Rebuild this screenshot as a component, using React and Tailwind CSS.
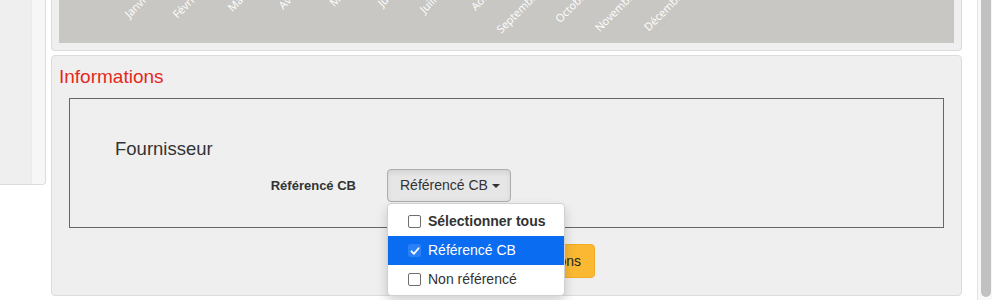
import React from "react";

const months = ["Janvier","Février","Mars","Avril","Mai","Juin","Juillet","Août","Septembre","Octobre","Novembre","Décembre"];

function Chart() {
  return (
    <div className="h-[43px] w-full bg-[#c8c7c3] overflow-hidden">
      <svg width="896" height="43" className="block">
        {months.map((m, i) => {
          const x = 95 + 48.4 * i;
          const y = -6;
          return (
            <text
              key={m}
              x={x}
              y={y}
              fill="#ffffff"
              fontSize="11"
              fontFamily="'Open Sans', 'DejaVu Sans', sans-serif"
              textAnchor="end"
              transform={`rotate(-45 ${x} ${y})`}
            >
              {m}
            </text>
          );
        })}
      </svg>
    </div>
  );
}

function Check({ checked }) {
  if (checked) {
    return (
      <span className="flex h-[13px] w-[13px] items-center justify-center rounded-[2px] bg-[#2a80f4]">
        <svg width="10" height="10" viewBox="0 0 10 10">
          <path d="M1.5 5.3 L4 7.8 L8.6 2.2" stroke="#fff" strokeWidth="1.8" fill="none" strokeLinecap="round" strokeLinejoin="round" />
        </svg>
      </span>
    );
  }
  return <span className="block h-[13px] w-[13px] rounded-[2px] border border-[#6e6e6e] bg-white" />;
}

export default function App() {
  return (
    <div
      className="flex h-[300px] w-[992px] overflow-hidden bg-white text-[#333]"
      style={{ fontFamily: "'Liberation Sans', Arial, sans-serif" }}
    >
      {/* sidebar */}
      <div className="flex h-[185px] w-[46px] shrink-0 overflow-hidden rounded-br-[4px] border-b border-r border-[#dcdcdc] bg-[#efefef]">
        <div className="flex-1" />
        <div className="w-[14px] border-l border-[#ececec] bg-[#f7f7f7]" />
      </div>

      {/* main */}
      <div className="ml-[5px] flex w-[911px] shrink-0 flex-col">
        <div className="h-[51px] rounded-b-[4px] border-x border-b border-[#dcdcdc] bg-[#efefef] px-[7px]">
          <Chart />
        </div>

        <div className="mt-[4px] h-[241px] rounded-[4px] border border-[#dcdcdc] bg-[#efefef] px-[7px] pt-[11px]">
          <div className="h-[20px] text-[19px] leading-[20px] text-[#e5291b]">Informations</div>
          <div className="mx-[10px] mt-[11px] h-[130px] border border-[#666] pt-[40px]">
            <div className="pl-[45px] text-[18.5px] leading-[20px] text-[#333]">Fournisseur</div>
            <div className="mt-[10px] flex items-center">
              <div className="w-[286px] text-right text-[13px] font-bold leading-[16px] text-[#333]">Référencé CB</div>
              <div className="relative ml-[31px]">
                <div className="flex h-[33px] w-[124px] items-center rounded-[4px] border border-[#adadad] bg-[#e6e6e6] pl-[12px] text-[14px] text-[#333] shadow-[inset_0_3px_5px_rgba(0,0,0,0.08)]">
                  <span>Référencé CB</span>
                  <span className="ml-[4px] mt-[1px] h-0 w-0 border-x-[4px] border-t-[4px] border-x-transparent border-t-[#333]" />
                </div>
                <div className="absolute left-0 top-[34px] z-10 w-[178px] rounded-[4px] border border-[#d0d0d0] bg-white pb-[1px] pt-[3px] shadow-[0_6px_12px_rgba(0,0,0,0.175)]">
                  <div className="flex h-[29px] items-center pl-[20px] text-[14px] font-bold text-[#333]">
                    <Check />
                    <span className="ml-[7px]">Sélectionner tous</span>
                  </div>
                  <div className="flex h-[29px] items-center bg-[#0a6cf0] pl-[20px] text-[14px] text-white">
                    <Check checked />
                    <span className="ml-[7px]">Référencé CB</span>
                  </div>
                  <div className="flex h-[29px] items-center pl-[20px] text-[14px] text-[#333]">
                    <Check />
                    <span className="ml-[7px]">Non référencé</span>
                  </div>
                </div>
              </div>
            </div>
          </div>
          <div className="mt-[16px] flex justify-center">
            <div className="flex h-[34px] w-[177px] items-center justify-center rounded-[4px] border border-[#f2ac22] bg-[#fbb933] text-[14px] text-[#222]">
              Afficher les informations
            </div>
          </div>
        </div>
      </div>

      {/* right gap + scrollbar */}
      <div className="w-[15px] shrink-0" />
      <div className="flex w-[15px] shrink-0 border-l border-[#e4e4e4] bg-[#f8f8f8] pl-[3px]">
        <div className="h-[297px] w-[10px] rounded-b-full bg-[#c1c1c1]" />
      </div>
    </div>
  );
}
